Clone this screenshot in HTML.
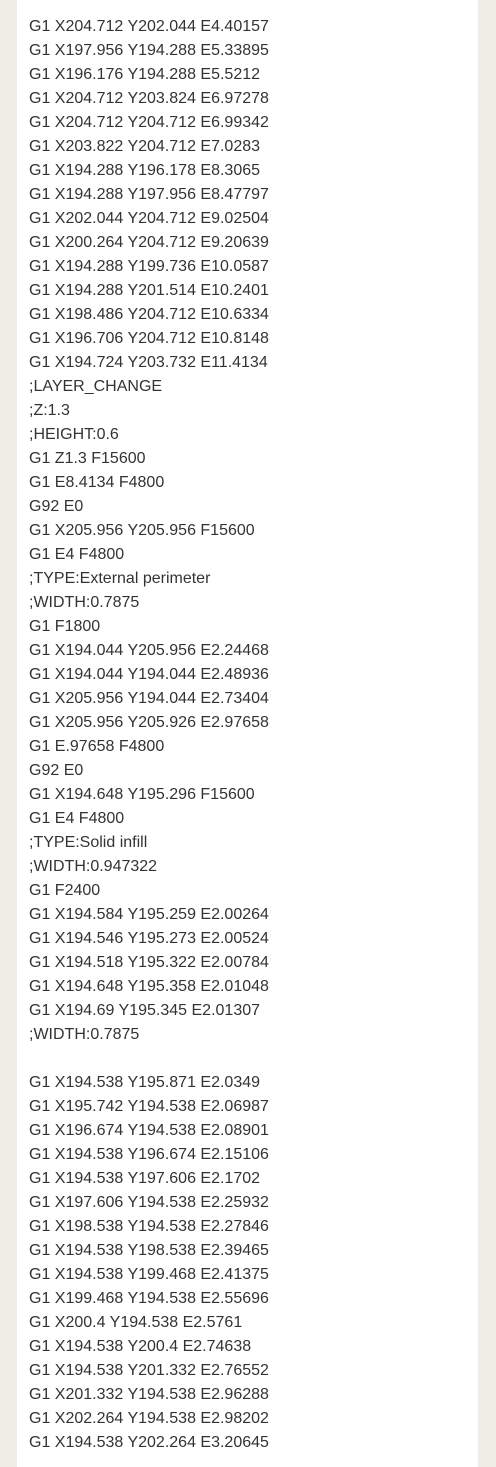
<!DOCTYPE html>
<html><head><meta charset="utf-8"><style>
html,body{margin:0;padding:0;background:#efede6;width:496px;height:1467px;overflow:hidden}
.p{position:absolute;left:17px;top:0;width:461px;height:1467px;background:#fff}
pre{margin:0;position:absolute;left:29px;top:15px;font-family:"Liberation Sans",sans-serif;font-size:16px;line-height:24px;color:#333;white-space:pre}
</style></head><body><div class="p"></div><pre>G1 X204.712 Y202.044 E4.40157
G1 X197.956 Y194.288 E5.33895
G1 X196.176 Y194.288 E5.5212
G1 X204.712 Y203.824 E6.97278
G1 X204.712 Y204.712 E6.99342
G1 X203.822 Y204.712 E7.0283
G1 X194.288 Y196.178 E8.3065
G1 X194.288 Y197.956 E8.47797
G1 X202.044 Y204.712 E9.02504
G1 X200.264 Y204.712 E9.20639
G1 X194.288 Y199.736 E10.0587
G1 X194.288 Y201.514 E10.2401
G1 X198.486 Y204.712 E10.6334
G1 X196.706 Y204.712 E10.8148
G1 X194.724 Y203.732 E11.4134
;LAYER_CHANGE
;Z:1.3
;HEIGHT:0.6
G1 Z1.3 F15600
G1 E8.4134 F4800
G92 E0
G1 X205.956 Y205.956 F15600
G1 E4 F4800
;TYPE:External perimeter
;WIDTH:0.7875
G1 F1800
G1 X194.044 Y205.956 E2.24468
G1 X194.044 Y194.044 E2.48936
G1 X205.956 Y194.044 E2.73404
G1 X205.956 Y205.926 E2.97658
G1 E.97658 F4800
G92 E0
G1 X194.648 Y195.296 F15600
G1 E4 F4800
;TYPE:Solid infill
;WIDTH:0.947322
G1 F2400
G1 X194.584 Y195.259 E2.00264
G1 X194.546 Y195.273 E2.00524
G1 X194.518 Y195.322 E2.00784
G1 X194.648 Y195.358 E2.01048
G1 X194.69 Y195.345 E2.01307
;WIDTH:0.7875

G1 X194.538 Y195.871 E2.0349
G1 X195.742 Y194.538 E2.06987
G1 X196.674 Y194.538 E2.08901
G1 X194.538 Y196.674 E2.15106
G1 X194.538 Y197.606 E2.1702
G1 X197.606 Y194.538 E2.25932
G1 X198.538 Y194.538 E2.27846
G1 X194.538 Y198.538 E2.39465
G1 X194.538 Y199.468 E2.41375
G1 X199.468 Y194.538 E2.55696
G1 X200.4 Y194.538 E2.5761
G1 X194.538 Y200.4 E2.74638
G1 X194.538 Y201.332 E2.76552
G1 X201.332 Y194.538 E2.96288
G1 X202.264 Y194.538 E2.98202
G1 X194.538 Y202.264 E3.20645</pre></body></html>
